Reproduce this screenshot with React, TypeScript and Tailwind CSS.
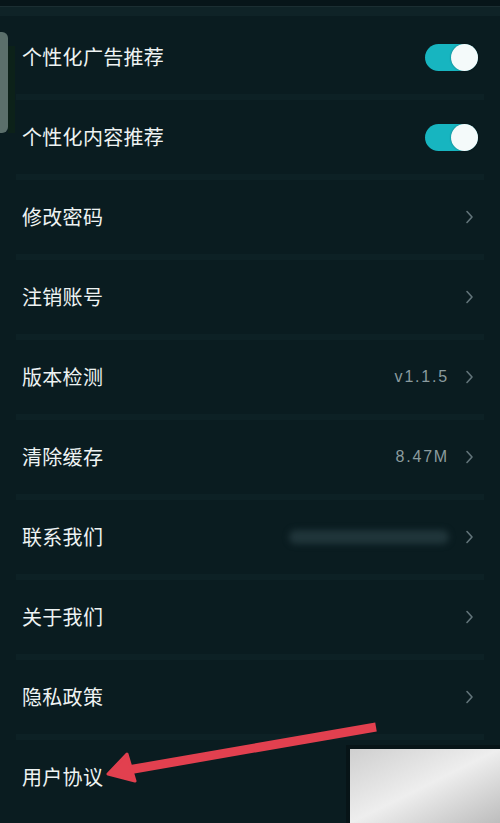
import React from "react";

type Row = {
  label: string;
  kind: "toggle" | "link";
  value?: string;
  blurred?: boolean;
};

const rows: Row[] = [
  { label: "个性化广告推荐", kind: "toggle" },
  { label: "个性化内容推荐", kind: "toggle" },
  { label: "修改密码", kind: "link" },
  { label: "注销账号", kind: "link" },
  { label: "版本检测", kind: "link", value: "v1.1.5" },
  { label: "清除缓存", kind: "link", value: "8.47M" },
  { label: "联系我们", kind: "link", blurred: true },
  { label: "关于我们", kind: "link" },
  { label: "隐私政策", kind: "link" },
  { label: "用户协议", kind: "link" },
];

function Toggle() {
  return (
    <div className="-mr-[4px] flex h-[27px] w-[53px] items-center justify-end rounded-full bg-[#17b5c0]">
      <div className="h-[27px] w-[27px] rounded-full bg-[#f4fafa] shadow-[0_0_2px_rgba(0,0,0,0.4)]" />
    </div>
  );
}

function Chevron() {
  return (
    <svg width="9" height="14" viewBox="0 0 9 14" className="text-[#62747a]">
      <polyline
        points="2,1.5 7,7 2,12.5"
        fill="none"
        stroke="currentColor"
        strokeWidth="1.6"
        strokeLinecap="round"
        strokeLinejoin="round"
      />
    </svg>
  );
}

export default function App() {
  return (
    <div
      className="relative h-[823px] w-[500px] overflow-hidden bg-[#0a1c20] text-[#eef3f3]"
      style={{ fontFamily: '"Noto Sans CJK SC", "Noto Sans", sans-serif' }}
    >
      {/* top edge of the screen */}
      <div className="h-[6px] bg-[#071519]" />
      <div className="h-px bg-[#1b2e32]" />
      <div className="h-[9px] bg-[#0f2327]" />
      <div className="h-[4px]" />

      {rows.map((row, i) => (
        <div key={row.label}>
          <div className="flex h-[74px] items-center justify-between pl-[22px] pr-[26px]">
            <span className="text-[20px] leading-none tracking-[0.3px]">{row.label}</span>
            {row.kind === "toggle" ? (
              <Toggle />
            ) : (
              <div className="flex items-center gap-[16px]">
                {row.value && (
                  <span
                    className="text-[16px] tracking-[1.8px] text-[#8a9b9e]"
                    style={{ fontFamily: '"Liberation Sans", sans-serif' }}
                  >
                    {row.value}
                  </span>
                )}
                {row.blurred && (
                  <span className="h-[14px] w-[160px] rounded-full bg-[#20353a] blur-[3px]" />
                )}
                <Chevron />
              </div>
            )}
          </div>
          {i < rows.length - 1 && <div className="mx-[16px] h-[6px] bg-[#0d2125]" />}
        </div>
      ))}

      {/* scroll handle on the left */}
      <div className="absolute left-0 top-[32px] h-[101px] w-[8px] rounded-r-[6px] bg-[#5b6f6b]" />
      <div className="absolute left-[8px] top-[46px] h-[87px] w-[7px] bg-[#0c2119]" />

      {/* watermark box */}
      <div className="absolute left-[346px] top-[745px] h-[78px] w-[154px] bg-[#071417] pl-[4px] pt-[4px]">
        <div className="h-full w-full bg-gradient-to-br from-[#cfcfcf] via-[#eeeeee] to-[#bdbdbd]" />
      </div>

      {/* red annotation arrow */}
      <svg className="absolute left-0 top-0" width="500" height="823" viewBox="0 0 500 823">
        <line x1="376" y1="727" x2="128" y2="770" stroke="#e2404f" strokeWidth="9" />
        <polygon points="108,774 127,754 135,781" fill="#e2404f" stroke="#e2404f" strokeWidth="3" strokeLinejoin="round" />
      </svg>
    </div>
  );
}
